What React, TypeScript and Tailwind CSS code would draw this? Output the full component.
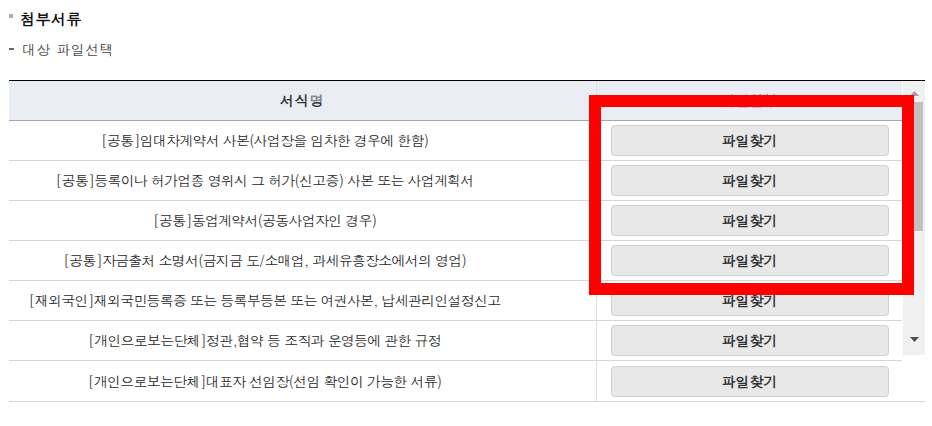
import React from "react";

const rows = [
  "[공통]임대차계약서 사본(사업장을 임차한 경우에 한함)",
  "[공통]등록이나 허가업종 영위시 그 허가(신고증) 사본 또는 사업계획서",
  "[공통]동업계약서(공동사업자인 경우)",
  "[공통]자금출처 소명서(금지금 도/소매업, 과세유흥장소에서의 영업)",
  "[재외국인]재외국민등록증 또는 등록부등본 또는 여권사본, 납세관리인설정신고",
  "[개인으로보는단체]정관,협약 등 조직과 운영등에 관한 규정",
  "[개인으로보는단체]대표자 선임장(선임 확인이 가능한 서류)",
];

export default function App() {
  return (
    <div className="relative w-[932px] h-[426px] bg-white font-['Dotum','Noto_Sans_CJK_KR',sans-serif] text-[#333] overflow-hidden">
      <div className="pl-[9px] pt-[7px]">
        <div className="flex items-center h-[22px]">
          <span className="w-[4px] h-[4px] bg-[#aaa] mr-[7px] -mt-[4px]" />
          <span className="text-[15px] font-bold text-[#111] leading-none tracking-[0.5px]">첨부서류</span>
        </div>
        <div className="flex items-center h-[22px] mt-[9px]">
          <span className="w-[5px] h-[2px] bg-[#666] mr-[8px]" />
          <span className="text-[14px] text-[#444] leading-none tracking-[0.5px]">대상 파일선택</span>
        </div>
      </div>
      <div className="ml-[9px] mt-[20px] w-[916px] border-t border-t-black border-b border-b-[#d6d6d6] flex">
        <div className="w-[893px]">
          <div className="flex h-[40px] bg-[#ebedf5] border-b border-b-[#a6a6a6]">
            <div className="w-[588px] flex items-center justify-center border-r border-r-[#dcdcdc] text-[14px] font-bold text-[#333] tracking-[1px]">서식명</div>
            <div className="flex-1 flex items-center justify-center text-[14px] font-bold text-[#333]">파일첨부</div>
          </div>
          {rows.map((r, i) => (
            <div key={i} className={`flex h-[40px] ${i < rows.length - 1 ? "border-b border-b-[#d6d6d6]" : ""}`}>
              <div className="w-[588px] pr-[76px] flex items-center justify-center border-r border-r-[#dcdcdc] text-[14px] tracking-[-0.8px] text-[#2a2a2a] whitespace-nowrap">{r}</div>
              <div className="flex-1 flex items-center justify-center">
                <button className="w-[278px] h-[31px] rounded-[4px] bg-[#e8e8e8] border border-[#d0d0d0] text-[14px] font-bold text-[#333]">파일찾기</button>
              </div>
            </div>
          ))}
        </div>
        <div className="w-[22px] h-[274px] bg-[#f0f0f0] flex flex-col items-center ml-[1px]">
          <div className="h-[18px] flex items-end justify-center pb-[3px]">
            <svg width="9" height="5" viewBox="0 0 9 5"><path d="M4.5 0L9 5H0Z" fill="#a0a0a0" /></svg>
          </div>
          <div className="w-[17px] h-[129px] bg-[#c1c1c1] mt-[3px]" />
          <div className="flex-1" />
          <div className="h-[20px] flex items-start justify-center pt-[2px]">
            <svg width="9" height="5" viewBox="0 0 9 5"><path d="M0 0H9L4.5 5Z" fill="#505050" /></svg>
          </div>
        </div>
      </div>
      <div className="absolute left-[589px] top-[95px] w-[325px] h-[200px] border-[12px] border-[#ff0000]" />
    </div>
  );
}
